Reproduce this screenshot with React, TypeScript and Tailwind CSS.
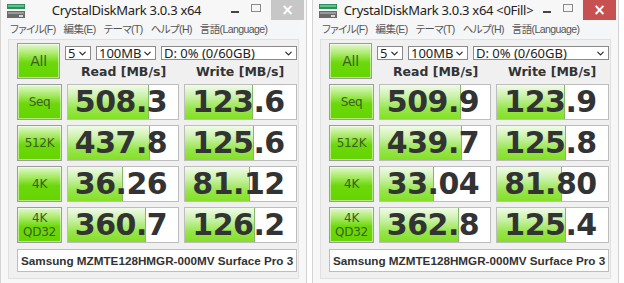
import React from "react";
import { ChevronDown } from "lucide-react";

type Row = { label: string[]; read: string; rw: number; write: string; ww: number };

const leftRows: Row[] = [
  { label: ["Seq"], read: "508.3", rw: 81, write: "123.6", ww: 68 },
  { label: ["512K"], read: "437.8", rw: 82, write: "125.6", ww: 69 },
  { label: ["4K"], read: "36.26", rw: 55, write: "81.12", ww: 65 },
  { label: ["4K", "QD32"], read: "360.7", rw: 78, write: "126.2", ww: 70 },
];

const rightRows: Row[] = [
  { label: ["Seq"], read: "509.9", rw: 81, write: "123.9", ww: 68 },
  { label: ["512K"], read: "439.7", rw: 82, write: "125.8", ww: 69 },
  { label: ["4K"], read: "33.04", rw: 54, write: "81.80", ww: 65 },
  { label: ["4K", "QD32"], read: "362.8", rw: 79, write: "125.4", ww: 69 },
];

const menu = ["ファイル(F)", "編集(E)", "テーマ(T)", "ヘルプ(H)", "言語(Language)"];

const AppIcon = () => (
  <svg width="20" height="16" viewBox="0 0 20 16">
    <rect x="1" y="1" width="18" height="5" fill="#2f8f5a" />
    <rect x="2" y="2" width="16" height="2" fill="#5cc48a" />
    <rect x="1" y="8" width="18" height="7" fill="#6b6b6b" />
    <rect x="2" y="9" width="16" height="2" fill="#9a9a9a" />
    <rect x="13" y="12" width="4" height="2" fill="#d8d8d8" />
  </svg>
);

const Dropdown = ({ text, w }: { text: string; w: string }) => (
  <div className={`${w} h-[14px] bg-white border border-[#8a8a8a] flex items-center justify-between pl-[2px] pr-[2px] text-[13px] leading-none text-[#222] font-['Noto_Sans',sans-serif]`}>
    <span>{text}</span>
    <ChevronDown size={11} strokeWidth={2.5} color="#222" />
  </div>
);

const LabelButton = ({ lines, big }: { lines: string[]; big?: boolean }) => (
  <div className="w-[45px] h-full border border-[#9c9c9c] bg-[linear-gradient(to_bottom,#e3f8d2_0%,#a6ea62_30%,#6cd80c_55%,#66d400_100%)] flex flex-col items-center justify-center shadow-[inset_0_0_0_1px_rgba(255,255,255,0.5)]">
    {lines.map((l) => (
      <span
        key={l}
        className={`${big ? "text-[14px]" : "text-[12px]"} leading-[14px] text-[#3d5f22] font-['DejaVu_Sans',sans-serif] tracking-[-0.3px]`}
      >
        {l}
      </span>
    ))}
  </div>
);

const Cell = ({ value, bar, w }: { value: string; bar: number; w: string }) => (
  <div className={`${w} h-full relative bg-white border border-[#bdbdbd] flex items-center justify-center`}>
    <div
      className="absolute left-0 top-0 bottom-0 bg-[linear-gradient(to_bottom,#f1fbe9_0%,#c9f1a6_35%,#96e54a_70%,#84e026_100%)] border-r border-[#86b86a]"
      style={{ width: bar }}
    />
    <span className="relative pr-[4px] text-[30px] leading-none font-bold text-[#333] font-['DejaVu_Sans',sans-serif] tracking-[-0.5px]">
      {value}
    </span>
  </div>
);

const Window = ({ title, active, rows }: { title: string; active: boolean; rows: Row[] }) => (
  <div className="w-[307px] h-[283px] shrink-0 bg-[#f7f7f7] border-x border-[#d4d4d4] flex flex-col">
    <div className="h-[21px] flex items-stretch">
      <div className="w-[26px] shrink-0 flex items-center justify-center pl-[3px] pt-[1px]">
        <AppIcon />
      </div>
      <div className="flex-1 min-w-0 flex items-center justify-center text-[13px] text-[#222] font-['Noto_Sans',sans-serif] whitespace-nowrap tracking-[-0.3px]">
        {title}
      </div>
      <div className="w-[80px] shrink-0 flex items-start">
        <div className="w-[15px] h-[20px] flex items-center justify-center pl-[3px]">
          <div className="w-[8px] h-[2px] bg-[#444] mt-[4px]" />
        </div>
        <div className="w-[30px] h-[20px] flex items-start justify-center pt-[4px]">
          <div className="w-[10px] h-[8px] border border-[#8a8a8a]" />
        </div>
        <div
          className={`w-[33px] h-[20px] flex items-center justify-center text-white text-[15px] font-bold font-['DejaVu_Sans',sans-serif] ${
            active ? "bg-[#c75050]" : "bg-[#c7c7c7]"
          }`}
        >
          ×
        </div>
      </div>
    </div>
    <div className="mx-[7px] flex-1 flex flex-col mb-[4px]">
      <div className="h-[18px] bg-[#f5f6f8] flex items-center gap-[8px] pl-[2px] text-[10.5px] text-[#555] font-['Liberation_Sans','Noto_Sans_CJK_JP',sans-serif] [font-feature-settings:'palt'] tracking-[-0.6px] whitespace-nowrap">
        {menu.map((m) => (
          <span key={m} className="shrink-0">{m}</span>
        ))}
      </div>
      <div className="flex-1 bg-[#f0f0f0] border border-[#e0e0e0] pl-[8px] pt-[3px] flex flex-col">
        <div className="h-[36px] flex gap-[5px]">
          <LabelButton lines={["All"]} big />
          <div className="flex flex-col">
            <div className="flex gap-[5px] mt-[3px]">
              <Dropdown text="5" w="w-[26px]" />
              <Dropdown text="100MB" w="w-[60px]" />
              <Dropdown text="D: 0% (0/60GB)" w="w-[136px]" />
            </div>
            <div className="flex mt-[6px] text-[12.5px] font-bold text-[#333] font-['DejaVu_Sans',sans-serif] leading-none">
              <span className="w-[117px] text-center">Read [MB/s]</span>
              <span className="w-[116px] text-center">Write [MB/s]</span>
            </div>
          </div>
        </div>
        <div className="flex flex-col gap-[5px] mt-[5px]">
          {rows.map((r) => (
            <div key={r.label.join(" ")} className="h-[36px] flex gap-[5px]">
              <LabelButton lines={r.label} />
              <Cell value={r.read} bar={r.rw} w="w-[112px]" />
              <Cell value={r.write} bar={r.ww} w="w-[113px]" />
            </div>
          ))}
        </div>
        <div className="mt-[6px] w-[280px] h-[23px] bg-white border border-[#bdbdbd] flex items-center pl-[3px] text-[11.7px] font-bold text-[#333] font-['Liberation_Sans',sans-serif] whitespace-nowrap">
          Samsung MZMTE128HMGR-000MV Surface Pro 3
        </div>
      </div>
    </div>
  </div>
);

export default function App() {
  return (
    <div className="w-[624px] h-[283px] bg-white flex gap-[5px] overflow-hidden">
      <Window title="CrystalDiskMark 3.0.3 x64" active={false} rows={leftRows} />
      <Window title="CrystalDiskMark 3.0.3 x64 <0Fill>" active rows={rightRows} />
    </div>
  );
}
